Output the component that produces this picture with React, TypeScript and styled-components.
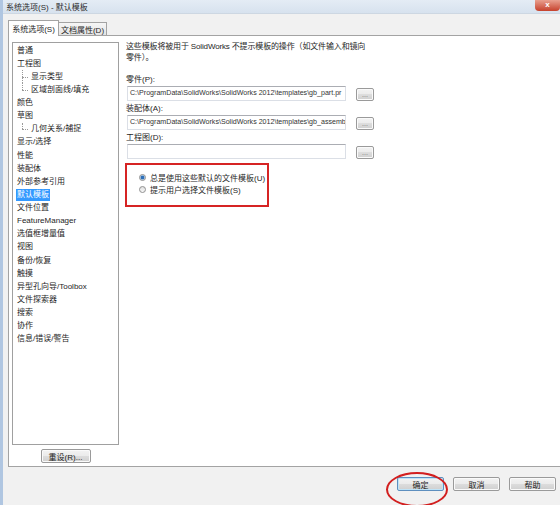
import React from "react";
import styled, { createGlobalStyle, css } from "styled-components";

const GlobalStyle = createGlobalStyle`
  html, body { margin: 0; padding: 0; }
  body {
    width: 560px;
    height: 505px;
    overflow: hidden;
    background: #f0f0f0;
    font-family: "Liberation Sans", "Noto Sans CJK SC", sans-serif;
    color: #1e1e1e;
  }
  * { box-sizing: border-box; }
`;

const Window = styled.div`
  position: relative;
  width: 560px;
  height: 505px;
  display: flex;
  flex-direction: column;
  background: #f1f1f1;
  border-left: 3px solid #b0c6e1;
  overflow: hidden;
`;

const TitleBar = styled.div`
  height: 14px;
  display: flex;
  align-items: center;
  padding-left: 3px;
  background: linear-gradient(#e4ecf5, #d7e2ee);
  border-bottom: 1px solid #cdd7e2;
  font-size: 8px;
  color: #2b2b2b;
`;

const CloseButton = styled.div`
  margin-left: auto;
  align-self: flex-start;
  width: 25px;
  height: 11px;
  border-radius: 0 0 4px 4px;
  background: linear-gradient(#e9a08f, #c6412c);
  color: #fff;
  font-size: 8px;
  line-height: 10px;
  text-align: center;
  font-weight: bold;
`;

const Body = styled.div`
  flex: 1;
  display: flex;
  flex-direction: column;
  padding: 6px 0 0 5px;
`;

const TabRow = styled.div`
  display: flex;
  align-items: flex-end;
  height: 15px;
`;

const Tab = styled.div<{ $active?: boolean }>`
  font-size: 8px;
  display: flex;
  align-items: center;
  justify-content: center;
  border: 1px solid #a3a3a3;
  border-bottom: none;
  position: relative;
  ${(p) =>
    p.$active
      ? css`
          width: 51px;
          height: 16px;
          background: #fff;
          margin-bottom: -1px;
          z-index: 1;
        `
      : css`
          width: 48px;
          height: 13px;
          border-left: none;
          background: linear-gradient(#f6f6f6, #e4e4e4);
        `}
`;

const Panel = styled.div`
  height: 432px;
  display: flex;
  background: #fff;
  border: 1px solid #a3a3a3;
  border-right: none;
  padding: 6px 0 0 3px;
`;

const LeftColumn = styled.div`
  width: 107px;
  display: flex;
  flex-direction: column;
  align-items: center;
  gap: 4px;
`;

const TreeBox = styled.div`
  width: 107px;
  height: 403px;
  border: 1px solid #a0a0a0;
  padding: 1px 0 0 2px;
  background: #fff;
`;

const TreeRow = styled.div<{ $child?: boolean; $last?: boolean }>`
  position: relative;
  height: 13.14px;
  display: flex;
  align-items: center;
  font-size: 8px;
  padding-left: ${(p) => (p.$child ? 15 : 1)}px;
  ${(p) =>
    p.$child &&
    css`
      &::before {
        content: "";
        position: absolute;
        left: 7px;
        top: 0;
        height: ${p.$last ? "50%" : "100%"};
        border-left: 1px dotted #9a9a9a;
      }
      &::after {
        content: "";
        position: absolute;
        left: 7px;
        top: 50%;
        width: 6px;
        border-top: 1px dotted #9a9a9a;
      }
    `}
`;

const TreeLabel = styled.span<{ $selected?: boolean }>`
  padding: 0 1px;
  line-height: 12px;
  ${(p) =>
    p.$selected &&
    css`
      background: #3399ff;
      color: #fff;
    `}
`;

const Button = styled.button<{ $default?: boolean; $w?: number }>`
  width: ${(p) => p.$w ?? 47}px;
  height: 14px;
  padding: 0;
  font-family: inherit;
  font-size: 8px;
  color: #1e1e1e;
  border: 1px solid ${(p) => (p.$default ? "#5e8fbf" : "#9a9a9a")};
  border-radius: 2px;
  background: linear-gradient(#f3f3f3 0%, #ebebeb 49%, #dddddd 50%, #cfcfcf 100%);
  box-shadow: inset 0 0 0 1px ${(p) => (p.$default ? "#bfe3f7" : "#fafafa")};
  display: flex;
  align-items: center;
  justify-content: center;
  flex-shrink: 0;
`;

const SmallButton = styled(Button)`
  width: 18px;
  height: 13px;
  font-size: 7px;
  color: #777;
  margin-top: 1px;
`;

const RightColumn = styled.div`
  margin-left: 7px;
  margin-top: -1px;
  display: flex;
  flex-direction: column;
`;

const Description = styled.div`
  font-size: 8px;
  line-height: 11px;
  margin-bottom: 11px;
  letter-spacing: -0.15px;
`;

const FieldGroup = styled.div`
  display: flex;
  flex-direction: column;
  margin-bottom: 2px;
`;

const FieldLabel = styled.div`
  font-size: 8px;
  line-height: 11px;
  margin-bottom: 1px;
`;

const FieldRow = styled.div`
  display: flex;
  align-items: center;
  gap: 10px;
`;

const TextBox = styled.div`
  flex-shrink: 0;
  margin-left: 1px;
  width: 219px;
  height: 15px;
  border: 1px solid #dbdfe6;
  border-top-color: #abadb3;
  background: #fff;
  font-size: 7.1px;
  color: #333;
  line-height: 13px;
  padding-left: 2px;
  white-space: nowrap;
  overflow: hidden;
`;

const RadioBox = styled.div`
  margin-top: 2px;
  margin-left: -1px;
  width: 144px;
  height: 44px;
  border: 2px solid #d62424;
  padding: 6px 0 0 12px;
  display: flex;
  flex-direction: column;
`;

const RadioRow = styled.div`
  display: flex;
  align-items: center;
  gap: 4px;
  height: 12px;
  font-size: 8px;
`;

const RadioCircle = styled.span<{ $checked?: boolean }>`
  width: 7px;
  height: 7px;
  border-radius: 50%;
  border: 1px solid #8f8f8f;
  background: ${(p) =>
    p.$checked
      ? "radial-gradient(circle, #2f6fb8 0 1.6px, #8fbbe6 2px, #e8e8e8 2.6px)"
      : "linear-gradient(#e0e0e0, #f8f8f8)"};
`;

const ButtonRow = styled.div`
  position: relative;
  display: flex;
  justify-content: flex-end;
  gap: 9px;
  padding: 10px 4px 0 0;
`;

const Highlight = styled.div`
  position: absolute;
  left: -11px;
  top: -5px;
  width: 62px;
  height: 35px;
  border: 2px solid #d21f1f;
  border-radius: 50%;
  pointer-events: none;
`;

const ButtonSlot = styled.div`
  position: relative;
`;

type Item = { label: string; child?: boolean; last?: boolean; selected?: boolean };

const items: Item[] = [
  { label: "普通" },
  { label: "工程图" },
  { label: "显示类型", child: true },
  { label: "区域剖面线/填充", child: true, last: true },
  { label: "颜色" },
  { label: "草图" },
  { label: "几何关系/捕捉", child: true, last: true },
  { label: "显示/选择" },
  { label: "性能" },
  { label: "装配体" },
  { label: "外部参考引用" },
  { label: "默认模板", selected: true },
  { label: "文件位置" },
  { label: "FeatureManager" },
  { label: "选值框增量值" },
  { label: "视图" },
  { label: "备份/恢复" },
  { label: "触摸" },
  { label: "异型孔向导/Toolbox" },
  { label: "文件探索器" },
  { label: "搜索" },
  { label: "协作" },
  { label: "信息/错误/警告" },
];

const fields = [
  { label: "零件(P):", value: "C:\\ProgramData\\SolidWorks\\SolidWorks 2012\\templates\\gb_part.pr" },
  { label: "装配体(A):", value: "C:\\ProgramData\\SolidWorks\\SolidWorks 2012\\templates\\gb_assemb" },
  { label: "工程图(D):", value: "" },
];

export default function App() {
  return (
    <>
      <GlobalStyle />
      <Window>
        <TitleBar>
          系统选项(S) - 默认模板
          <CloseButton>x</CloseButton>
        </TitleBar>
        <Body>
          <TabRow>
            <Tab $active>系统选项(S)</Tab>
            <Tab>文档属性(D)</Tab>
          </TabRow>
          <Panel>
            <LeftColumn>
              <TreeBox>
                {items.map((it) => (
                  <TreeRow key={it.label} $child={it.child} $last={it.last}>
                    <TreeLabel $selected={it.selected}>{it.label}</TreeLabel>
                  </TreeRow>
                ))}
              </TreeBox>
              <Button $w={50}>重设(R)...</Button>
            </LeftColumn>
            <RightColumn>
              <Description>
                这些模板将被用于 SolidWorks 不提示模板的操作（如文件输入和镜向
                <br />
                零件）。
              </Description>
              {fields.map((f) => (
                <FieldGroup key={f.label}>
                  <FieldLabel>{f.label}</FieldLabel>
                  <FieldRow>
                    <TextBox>{f.value}</TextBox>
                    <SmallButton>...</SmallButton>
                  </FieldRow>
                </FieldGroup>
              ))}
              <RadioBox>
                <RadioRow>
                  <RadioCircle $checked />
                  总是使用这些默认的文件模板(U)
                </RadioRow>
                <RadioRow>
                  <RadioCircle />
                  提示用户选择文件模板(S)
                </RadioRow>
              </RadioBox>
            </RightColumn>
          </Panel>
          <ButtonRow>
            <ButtonSlot>
              <Button $default>确定</Button>
              <Highlight />
            </ButtonSlot>
            <Button>取消</Button>
            <Button>帮助</Button>
          </ButtonRow>
        </Body>
      </Window>
    </>
  );
}
